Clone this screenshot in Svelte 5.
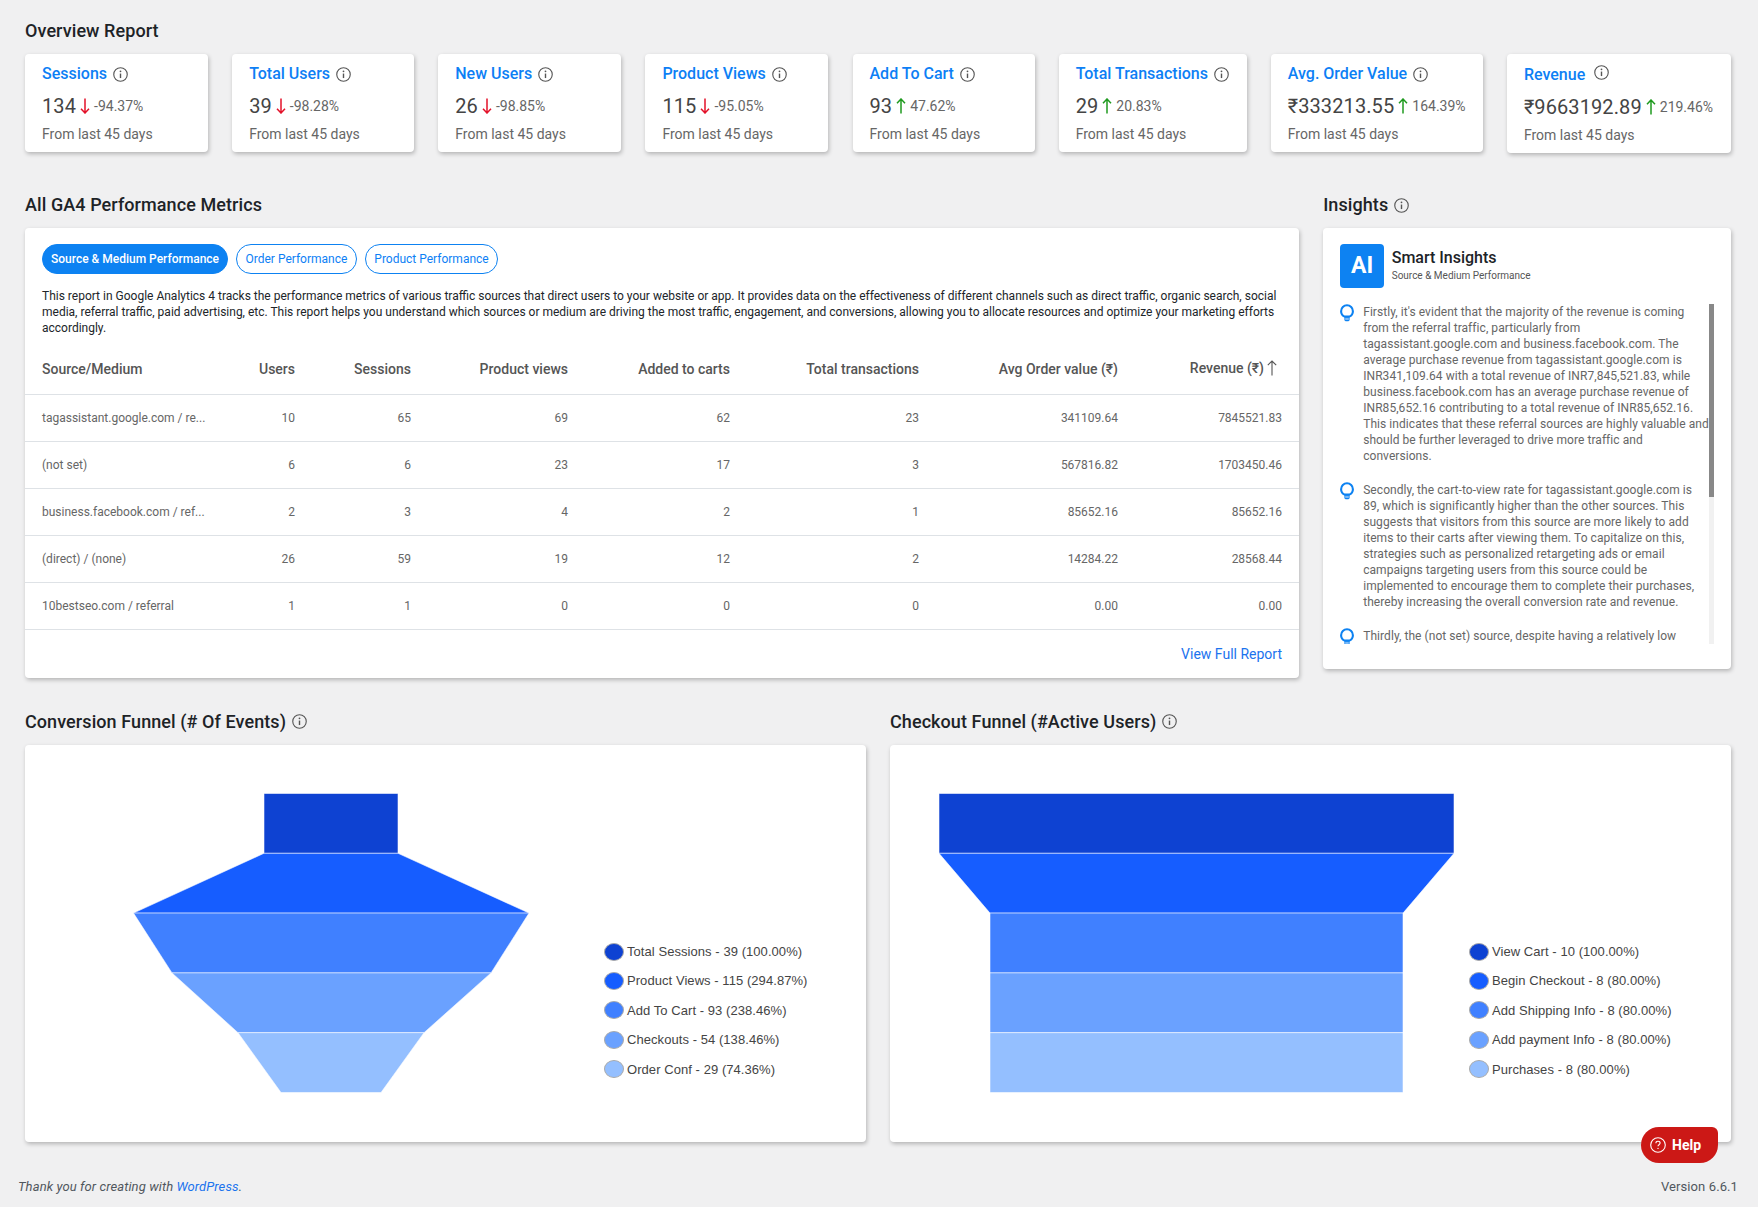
<script lang="ts">
  const overview = [
    { title: "Sessions", value: "134", change: "-94.37%", up: false },
    { title: "Total Users", value: "39", change: "-98.28%", up: false },
    { title: "New Users", value: "26", change: "-98.85%", up: false },
    { title: "Product Views", value: "115", change: "-95.05%", up: false },
    { title: "Add To Cart", value: "93", change: "47.62%", up: true },
    { title: "Total Transactions", value: "29", change: "20.83%", up: true },
    { title: "Avg. Order Value", value: "₹333213.55", change: "164.39%", up: true },
    { title: "Revenue", value: "₹9663192.89", change: "219.46%", up: true },
  ];

  const tabs = ["Source & Medium Performance", "Order Performance", "Product Performance"];

  const rows = [
    ["tagassistant.google.com / re...", "10", "65", "69", "62", "23", "341109.64", "7845521.83"],
    ["(not set)", "6", "6", "23", "17", "3", "567816.82", "1703450.46"],
    ["business.facebook.com / ref...", "2", "3", "4", "2", "1", "85652.16", "85652.16"],
    ["(direct) / (none)", "26", "59", "19", "12", "2", "14284.22", "28568.44"],
    ["10bestseo.com / referral", "1", "1", "0", "0", "0", "0.00", "0.00"],
  ];

  const insights = [
    "Firstly, it's evident that the majority of the revenue is coming from the referral traffic, particularly from tagassistant.google.com and business.facebook.com. The average purchase revenue from tagassistant.google.com is INR341,109.64 with a total revenue of INR7,845,521.83, while business.facebook.com has an average purchase revenue of INR85,652.16 contributing to a total revenue of INR85,652.16. This indicates that these referral sources are highly valuable and should be further leveraged to drive more traffic and conversions.",
    "Secondly, the cart-to-view rate for tagassistant.google.com is 89, which is significantly higher than the other sources. This suggests that visitors from this source are more likely to add items to their carts after viewing them. To capitalize on this, strategies such as personalized retargeting ads or email campaigns targeting users from this source could be implemented to encourage them to complete their purchases, thereby increasing the overall conversion rate and revenue.",
    "Thirdly, the (not set) source, despite having a relatively low",
  ];

  const colors = ["#0e42d2", "#165dff", "#4080ff", "#6aa1ff", "#94bfff"];

  // [left, right] of each level's lower edge, in px from the card's left edge
  const funnels = [
    {
      title: "Conversion Funnel (# Of Events)",
      edges: [[239, 373], [108.5, 504], [147, 466], [213, 399], [256, 356]],
      legend: ["Total Sessions - 39 (100.00%)", "Product Views - 115 (294.87%)", "Add To Cart - 93 (238.46%)", "Checkouts - 54 (138.46%)", "Order Conf - 29 (74.36%)"],
    },
    {
      title: "Checkout Funnel (#Active Users)",
      edges: [[49, 564], [100, 513], [100, 513], [100, 513], [100, 513]],
      legend: ["View Cart - 10 (100.00%)", "Begin Checkout - 8 (80.00%)", "Add Shipping Info - 8 (80.00%)", "Add payment Info - 8 (80.00%)", "Purchases - 8 (80.00%)"],
    },
  ];

  const levelH = 59.8;

  function segment(edges: number[][], i: number) {
    const [l, r] = edges[i - 1] ?? edges[i];
    const [nl, nr] = edges[i];
    const top = i * levelH + 0.5;
    const bottom = top + levelH;
    return `${l},${top} ${r},${top} ${nr},${bottom} ${nl},${bottom}`;
  }
</script>

{#snippet info()}
  <svg class="info" viewBox="0 0 16 16" fill="none" stroke="currentColor">
    <circle cx="8" cy="8" r="7.2" stroke-width="1.2" />
    <path d="M8 7v4.8" stroke-width="1.5" />
    <circle cx="8" cy="4.6" r="0.95" fill="currentColor" stroke="none" />
  </svg>
{/snippet}

{#snippet arrow(up: boolean)}
  <svg class="arrow" class:up viewBox="0 0 10 16" fill="none" stroke="currentColor" stroke-width="1.5">
    {#if up}
      <path d="M5 15.5V1M1 5.2 5 1l4 4.2" />
    {:else}
      <path d="M5 .5V15M1 10.8 5 15l4-4.2" />
    {/if}
  </svg>
{/snippet}

<div class="page">
  <h2>Overview Report</h2>
  <div class="overview">
    {#each overview as card}
      <div class="card stat" class:revenue={card.title === "Revenue"}>
        <div class="stat-title">
          <span>{card.title}</span>
          {@render info()}
        </div>
        <div class="stat-value">
          <span class="num">{card.value}</span>
          {@render arrow(card.up)}
          <span class="pct">{card.change}</span>
        </div>
        <div class="stat-from">From last 45 days</div>
      </div>
    {/each}
  </div>

  <div class="middle">
    <section>
      <h2>All GA4 Performance Metrics</h2>
      <div class="card metrics">
        <div class="tabs">
          {#each tabs as tab, i}
            <button class="tab" class:active={i === 0}>{tab}</button>
          {/each}
        </div>
        <p class="desc">This report in Google Analytics 4 tracks the performance metrics of various traffic sources that direct users to your website or app. It provides data on the effectiveness of different channels such as direct traffic, organic search, social media, referral traffic, paid advertising, etc. This report helps you understand which sources or medium are driving the most traffic, engagement, and conversions, allowing you to allocate resources and optimize your marketing efforts accordingly.</p>
        <table>
          <colgroup>
            <col class="c0" /><col class="c1" /><col class="c2" /><col class="c3" /><col class="c4" /><col class="c5" /><col class="c6" /><col class="c7" />
          </colgroup>
          <thead>
            <tr>
              <th>Source/Medium</th>
              <th>Users</th>
              <th>Sessions</th>
              <th>Product views</th>
              <th>Added to carts</th>
              <th>Total transactions</th>
              <th>Avg Order value (₹)</th>
              <th class="sorted">Revenue (₹)<svg class="sort" viewBox="0 0 10 16" fill="none" stroke="currentColor" stroke-width="1.1"><path d="M5 15.5V1M.8 5.2 5 1l4.2 4.2" /></svg></th>
            </tr>
          </thead>
          <tbody>
            {#each rows as row}
              <tr>
                {#each row as cell}
                  <td>{cell}</td>
                {/each}
              </tr>
            {/each}
          </tbody>
        </table>
        <div class="more"><a href="#report">View Full Report</a></div>
      </div>
    </section>

    <section>
      <h2>Insights {@render info()}</h2>
      <div class="card smart">
        <div class="smart-head">
          <div class="ai">AI</div>
          <div class="smart-text">
            <div class="smart-title">Smart Insights</div>
            <div class="smart-sub">Source &amp; Medium Performance</div>
          </div>
        </div>
        <div class="insight-list">
          {#each insights as text}
            <div class="insight">
              <svg class="bulb" viewBox="0 0 14 18" fill="none" stroke="#0d82f2">
                <path d="M4.6 12.6C2.6 11.7 1.1 9.7 1.1 7.2a5.9 5.9 0 0 1 11.8 0c0 2.5-1.5 4.5-3.5 5.4z" stroke-width="2.1" />
                <path d="M4.4 13.2v3l1.2 1h2.8l1.2-1v-3z" fill="#0d82f2" stroke="none" />
                <path d="M5.2 15h3.6" stroke="#fff" stroke-width="0.9" />
              </svg>
              <p>{text}</p>
            </div>
          {/each}
          <div class="scroll-track"><div class="scroll-thumb"></div></div>
        </div>
      </div>
    </section>
  </div>

  <div class="funnels">
    {#each funnels as funnel}
      <section>
        <h2>{funnel.title} {@render info()}</h2>
        <div class="card funnel">
          <svg class="chart" viewBox="0 0 579 300">
            {#each funnel.edges as _, i}
              <polygon points={segment(funnel.edges, i)} fill={colors[i]} stroke="#fff" stroke-opacity="0.55" />
            {/each}
          </svg>
          <ul class="legend">
            {#each funnel.legend as label, i}
              <li><span class="dot" style:background={colors[i]}></span>{label}</li>
            {/each}
          </ul>
        </div>
      </section>
    {/each}
  </div>
</div>

<footer>
  <em>Thank you for creating with <a href="#wp">WordPress</a>.</em>
  <span>Version 6.6.1</span>
</footer>

<button class="help">
  <svg viewBox="0 0 16 16" fill="none" stroke="#fff" stroke-width="1.1">
    <circle cx="8" cy="8" r="7.3" />
    <path d="M5.9 6.2c0-1.2.9-1.9 2.1-1.9s2.1.7 2.1 1.8c0 1.6-2.1 1.6-2.1 3.1" />
    <circle cx="8" cy="11.4" r="0.7" fill="#fff" stroke="none" />
  </svg>
  Help
</button>

<style>
  :global(body) {
    background: #f0f0f1;
    font-family: Roboto, "Liberation Sans", sans-serif;
    color: #3c434a;
  }

  .page {
    padding: 20px 0 0 25px;
    width: 1706px;
  }

  h2 {
    display: flex;
    align-items: center;
    gap: 6px;
    margin: 0 0 12px;
    font-size: 18px;
    line-height: 22px;
    font-weight: 500;
    letter-spacing: 0.08px;
    color: #1d2327;
  }

  .card {
    background: #fff;
    border-radius: 4px;
    box-shadow: 1px 2px 4px rgba(0, 0, 0, 0.25);
  }

  .info {
    width: 15px;
    height: 15px;
    flex-shrink: 0;
    color: #555;
  }

  /* overview cards */
  .overview {
    display: grid;
    grid-template-columns: 183px 182px 183px 183px 182px 188px 212px 224px;
    column-gap: 24.14px;
    align-items: start;
    margin-bottom: 41px;
  }

  .stat {
    padding: 10px 0 9px 17px;
  }

  .stat.revenue {
    padding-top: 11px;
  }

  .stat-title {
    display: flex;
    align-items: center;
    gap: 6px;
    font-size: 16px;
    line-height: 20px;
    font-weight: 500;
    color: #0d7ff5;
  }

  .revenue .stat-title {
    gap: 9px;
  }

  .revenue .info {
    transform: translateY(-3px);
  }

  .stat-value {
    display: flex;
    align-items: center;
    margin-top: 11px;
    height: 22px;
  }

  .num {
    font-size: 20px;
    letter-spacing: 0.1px;
    color: #444;
  }

  .arrow {
    width: 10px;
    height: 16px;
    margin: 0 4px;
    color: #e3122a;
    flex-shrink: 0;
  }

  .arrow.up {
    color: #1f9a1f;
  }

  .pct {
    font-size: 14px;
    color: #666;
  }

  .stat-from {
    margin-top: 8px;
    font-size: 14px;
    line-height: 18px;
    color: #666;
  }

  /* metrics table */
  .middle {
    display: grid;
    grid-template-columns: 1274px 407.8px;
    column-gap: 24.2px;
    align-items: start;
    margin-bottom: 33px;
  }

  .metrics {
    padding-top: 16px;
  }

  .tabs {
    display: flex;
    gap: 8px;
    padding: 0 17px;
  }

  .tab {
    height: 30px;
    padding: 0 8.5px;
    border: 1px solid #0d82f2;
    border-radius: 15px;
    background: #fff;
    color: #0d7ff5;
    font-family: inherit;
    font-size: 12px;
    font-weight: 400;
  }

  .tab.active {
    padding: 0 8px;
    background: #0d82f2;
    color: #fff;
    font-weight: 500;
  }

  .desc {
    margin: 14px 17px 8px;
    font-size: 12px;
    line-height: 16px;
    color: #212529;
  }

  table {
    width: 1274px;
    table-layout: fixed;
    border-collapse: collapse;
    font-size: 12px;
  }

  .c0 { width: 170px; }
  .c1 { width: 100px; }
  .c2 { width: 116px; }
  .c3 { width: 157px; }
  .c4 { width: 162px; }
  .c5 { width: 189px; }
  .c6 { width: 199px; }
  .c7 { width: 181px; }

  th,
  td {
    box-sizing: border-box;
    padding: 0;
    text-align: right;
    border-bottom: 1px solid #dee2e6;
  }

  th {
    height: 50px;
    font-size: 14px;
    font-weight: 500;
    color: #555;
  }

  td {
    height: 47px;
    color: #666;
  }

  th:first-child,
  td:first-child {
    padding-left: 17px;
    text-align: left;
    white-space: nowrap;
  }

  th:last-child,
  td:last-child {
    padding-right: 17px;
  }

  .sorted {
    padding-bottom: 1px;
  }

  .sort {
    width: 10px;
    height: 16px;
    margin: 0 4.7px 0 3.3px;
    vertical-align: -3px;
  }

  .more {
    display: flex;
    align-items: center;
    justify-content: flex-end;
    height: 48px;
    padding-right: 17px;
    font-size: 14px;
  }

  a {
    color: #1b73ee;
    text-decoration: none;
  }

  /* smart insights */
  .smart {
    padding: 16px 17px 25px;
  }

  .smart-head {
    display: flex;
    align-items: center;
    gap: 7.5px;
    margin-bottom: 16px;
  }

  .smart-text {
    padding-bottom: 2px;
  }

  .ai {
    width: 44px;
    height: 44px;
    border-radius: 4px;
    background: #0d82f2;
    color: #fff;
    font-size: 23px;
    font-weight: 700;
    line-height: 44px;
    text-align: center;
  }

  .smart-title {
    font-size: 16px;
    line-height: 20px;
    font-weight: 500;
    color: #1d2327;
  }

  .smart-sub {
    margin-top: 1px;
    font-size: 10px;
    line-height: 14px;
    color: #555;
  }

  .insight-list {
    position: relative;
    height: 340px;
    padding-right: 5px;
    overflow: hidden;
  }

  .scroll-track {
    position: absolute;
    top: 0;
    right: 0;
    bottom: 0;
    width: 5px;
    background: #f1f1f1;
  }

  .scroll-thumb {
    height: 193px;
    background: #888;
  }

  .insight {
    display: flex;
    gap: 9px;
    margin-bottom: 18px;
  }

  .insight p {
    flex: 1;
    margin: 0;
    font-size: 12px;
    letter-spacing: 0.06px;
    line-height: 16px;
    color: #666;
  }

  .bulb {
    width: 14px;
    height: 18px;
    flex-shrink: 0;
  }

  /* funnels */
  .funnels {
    display: grid;
    grid-template-columns: 841px 841px;
    column-gap: 24px;
  }

  .funnel {
    display: flex;
    height: 397px;
    padding-top: 48px;
    box-sizing: border-box;
  }

  .chart {
    flex: 0 0 579px;
    width: 579px;
    height: 300px;
  }

  .legend {
    list-style: none;
    margin: 150px 0 0;
    padding: 0;
    display: flex;
    flex-direction: column;
    gap: 11.4px;
    font-family: "Liberation Sans", Arial, sans-serif;
    font-size: 13px;
    letter-spacing: 0.06px;
    color: #444;
  }

  .legend li {
    display: flex;
    align-items: center;
    gap: 3px;
    height: 18px;
  }

  .dot {
    box-sizing: border-box;
    width: 20px;
    height: 18px;
    border: 1px solid #aaa;
    border-radius: 50%;
  }

  footer {
    display: flex;
    justify-content: space-between;
    align-items: center;
    height: 20px;
    margin-top: 35px;
    padding: 0 20px 0 18px;
    font-size: 13px;
    letter-spacing: 0.1px;
    color: #50575e;
  }

  .help {
    position: fixed;
    right: 40px;
    bottom: 44px;
    display: flex;
    align-items: center;
    gap: 6px;
    width: 77px;
    height: 36px;
    padding: 0 0 0 9px;
    border: 0;
    border-radius: 18px 6px 18px 18px;
    background: #cc1816;
    color: #fff;
    font-family: inherit;
    font-size: 14px;
    font-weight: 700;
  }

  .help svg {
    width: 16px;
    height: 16px;
  }
</style>
